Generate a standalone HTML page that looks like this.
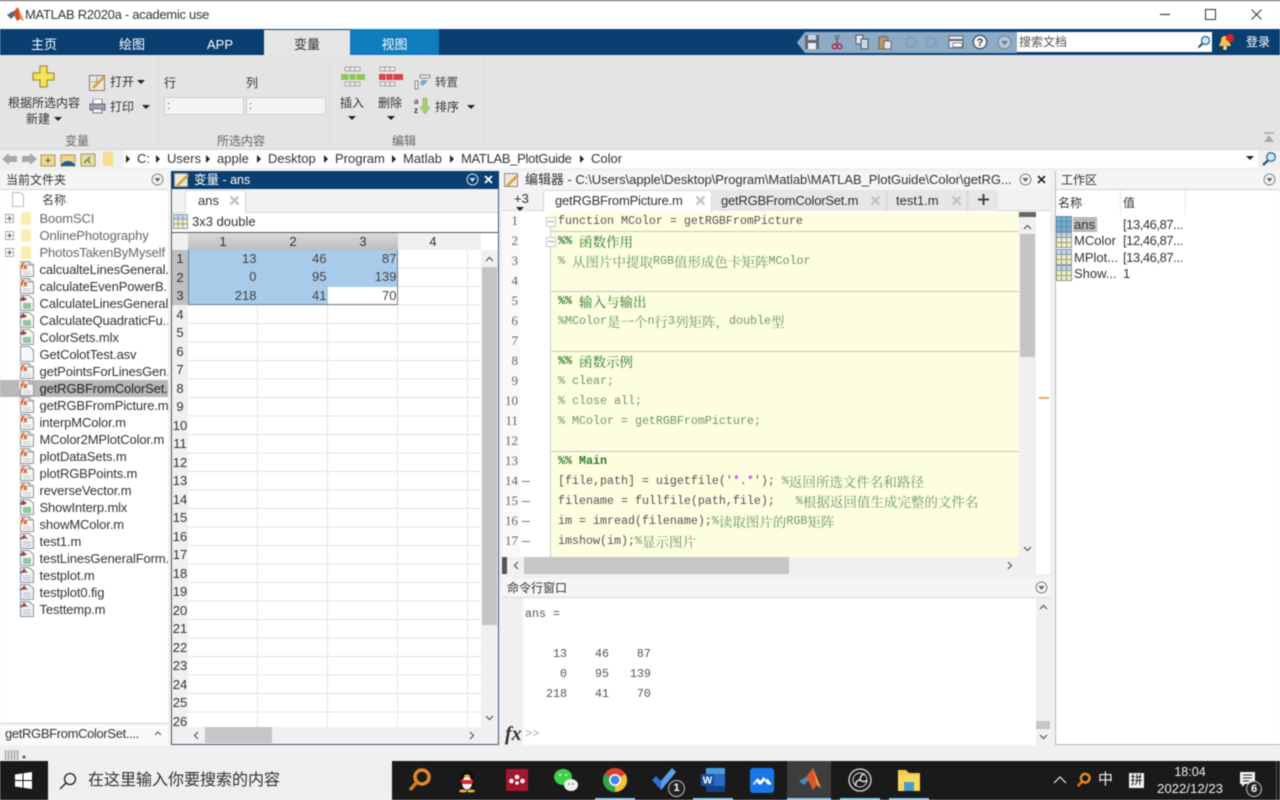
<!DOCTYPE html>
<html lang="zh"><head><meta charset="utf-8"><title>MATLAB R2020a</title>
<style>
html,body{margin:0;padding:0;width:1280px;height:800px;overflow:hidden;background:#f0f0f0}
body{position:relative;font-family:"Liberation Sans","Noto Sans CJK SC",sans-serif;font-size:13px;color:#222}
#p{position:absolute;left:0;top:0;width:1280px;height:800px;overflow:hidden;filter:blur(.4px)}
.a{position:absolute;white-space:nowrap}
.b{position:absolute}
.tab{position:absolute;top:29px;height:26px;line-height:31px;text-align:center;color:#fff;font-size:13px}
.rl{position:absolute;color:#444;font-size:12px;line-height:14px;white-space:nowrap}
.sep{position:absolute;top:58px;width:1px;height:89px;background:#dcdcdc}
.crumb{position:absolute;top:151px;line-height:16px;font-size:13px;color:#333;white-space:nowrap}
.arr{position:absolute;top:155px;width:0;height:0;border-left:4px solid #222;border-top:4px solid transparent;border-bottom:4px solid transparent}
.dn{position:absolute;width:0;height:0;border-top:4px solid #222;border-left:4px solid transparent;border-right:4px solid transparent}
.fl{position:absolute;left:0;top:210px;width:168px}
.fl div{position:relative;height:17px;line-height:17px;padding-left:39.5px;white-space:nowrap;overflow:hidden;color:#333;letter-spacing:-.13px}
.fl svg{position:absolute;left:19px;top:0;width:15px;height:16px}
.fl .d{color:#666}
.fl .s{background:#b8b8b8;margin-right:0;color:#222}
.plus{position:absolute;left:5px;top:4px;width:7px;height:7px;border:1px solid #aaa;background:#fff}
.plus:before{content:"";position:absolute;left:1px;top:3px;width:5px;height:1px;background:#555}
.plus:after{content:"";position:absolute;left:3px;top:1px;width:1px;height:5px;background:#555}
.rn{position:absolute;left:172px;top:250px;width:16px;font-size:13px;color:#333}
.rn div{height:18.5px;line-height:18.5px;text-align:center;white-space:nowrap}
.ch{position:absolute;top:233px;height:17px;line-height:17px;text-align:center;width:70px;color:#333;font-size:13px}
.cell{position:absolute;width:68.500px;height:18px;line-height:18px;text-align:right;color:#444;font-size:13px}
.ed{position:absolute;left:558px;top:211px;font-family:"Liberation Mono","Noto Serif CJK SC",monospace;font-size:11.67px;color:#555}
.ed div{height:20px;line-height:20px;white-space:pre}
.ed i{font-style:normal;font-family:"Noto Serif CJK SC",serif;font-size:13.5px;font-weight:normal;line-height:20px;display:inline-block;height:20px;vertical-align:top}
.g{color:#6c9a60}.h{color:#2c7a2c;font-weight:bold}.v{color:#a020f0}
.ln{position:absolute;left:502px;top:211px;width:16px;font-family:"Liberation Serif","Noto Serif CJK SC",serif;font-size:13px;color:#666;text-align:right}
.ln div{height:20px;line-height:20px}
.hr{position:absolute;left:551px;width:468px;height:1px;background:#c9c9b8}
.dash{position:absolute;left:522px;width:8px;height:1px;background:#777}
.cmd{position:absolute;left:525px;top:604px;font-family:"Liberation Mono",monospace;font-size:11.67px;color:#555}
.cmd div{height:20px;line-height:20px;white-space:pre}
.ws{position:absolute;font-size:13px;color:#333;line-height:17px;white-space:nowrap}
.wv{letter-spacing:-.45px}
.mi{position:absolute;left:1056px;width:16px;height:16px}
.ti{position:absolute;top:767px;width:26px;height:26px}
.ul{position:absolute;top:798px;height:2px;background:#8fc6e8}
.qa{position:absolute;top:34px;width:16px;height:16px}
.fold{position:absolute;left:546px;width:8px;height:8px;background:#fff;border:1px solid #c8c8c8}
.fold:after{content:"";position:absolute;left:1px;top:3px;width:6px;height:1px;background:#999}
</style></head><body><div id="p">
<svg width="0" height="0" style="position:absolute"><defs>
<symbol id="fx" viewBox="0 0 15 16"><path d="M1.500 .5h8.500l4.500 3.500v11.500H1.500z" fill="#f6f6f4" stroke="#8a93a3"/><path d="M10 .5V4h4.500" fill="#dde" stroke="#8a93a3"/><rect x="0" y="1" width="9" height="8" fill="#f3e0cc"/><path d="M2 8l1.500-5.500h2M1.800 5h2.500M5 4l2.500 4M8 4L4.800 8" stroke="#b8421e" stroke-width="1" fill="none"/><path d="M4 11h8M4 13h8" stroke="#c6cad2"/></symbol>
<symbol id="ml" viewBox="0 0 15 16"><path d="M1.500 .5h8.500l4.500 3.500v11.500H1.500z" fill="#f6f6f4" stroke="#8a93a3"/><path d="M1 5l3-4 1.500 1.500L8 4 5 6z" fill="#a5432a"/><path d="M0 5l3-1 1 2z" fill="#2e5f8f"/><rect x="4" y="8" width="8" height="6" fill="#8fc7a5"/></symbol>
<symbol id="tp" viewBox="0 0 15 16"><path d="M1.500 .5h8.500l4.500 3.500v11.500H1.500z" fill="#eef0f4" stroke="#8a93a3"/><path d="M2 6l3-5 2 3 2 2-3-.5z" fill="#b8421e"/><path d="M0 6l3-2 1 2z" fill="#2e5f8f"/><path d="M4 9h8M4 11h8M4 13h8" stroke="#bcc2cc"/></symbol>
<symbol id="mat" viewBox="0 0 16 16"><rect x=".5" y=".5" width="15" height="15" fill="#f4f1b8" stroke="#8d96a0"/><rect x="1" y="1" width="14" height="4.500" fill="#bcd8ee"/><path d="M5.500 1v14M10.500 1v14M1 5.500h14M1 10.500h14" stroke="#8d96a0" stroke-width="1"/></symbol>
</defs></svg>

<!-- title bar -->
<div class="b" style="left:0;top:0;width:1280px;height:29px;background:#fff;border-top:1px solid #555;box-sizing:border-box"></div>
<svg class="b" style="left:7px;top:7px" width="17" height="15" viewBox="0 0 17 15"><path d="M0 8l6-4 3 3-5 5z" fill="#3d6d98"/><path d="M5 6l6-6 6 14-4-2-3 2-3-6z" fill="#c8502a"/><path d="M11 0l6 14-4-2z" fill="#e8923e"/></svg>
<div class="a" style="left:25px;top:7px;line-height:15px;font-size:13px;color:#333;letter-spacing:-.28px">MATLAB R2020a - academic use</div>
<div class="b" style="left:1160px;top:14px;width:10px;height:1px;background:#222"></div>
<div class="b" style="left:1205px;top:9px;width:9px;height:9px;border:1px solid #333"></div>
<svg class="b" style="left:1251px;top:9px" width="11" height="11"><path d="M.5.500l10 10M10.500.500l-10 10" stroke="#333"/></svg>

<!-- tabs -->
<div class="b" style="left:0;top:29px;width:1280px;height:26px;background:#0a4071"></div>
<div class="tab" style="left:0;width:88px">主页</div>
<div class="tab" style="left:88px;width:88px">绘图</div>
<div class="tab" style="left:176px;width:88px">APP</div>
<div class="tab" style="left:264px;width:86px;background:#e5e5e5;color:#333;top:30px;height:25px;line-height:29px">变量</div>
<div class="tab" style="left:350px;width:89px;background:#0f7cbc">视图</div>

<!-- quick access -->
<svg class="b" style="left:797px;top:31px" width="220" height="23"><path d="M8 1H220V22H8L0 11.500z" fill="#8eabc6"/></svg>
<svg class="qa" style="left:804px" viewBox="0 0 16 16"><rect x="1" y="1" width="14" height="14" fill="#5d6a78"/><rect x="4" y="1" width="8" height="5" fill="#cdd5dd"/><rect x="4" y="9" width="8" height="6" fill="#eef1f4"/></svg>
<svg class="qa" style="left:829px" viewBox="0 0 16 16"><path d="M10 1L7 10M6 1l3 9" stroke="#667" stroke-width="1.300"/><circle cx="5.500" cy="12.500" r="2.300" fill="none" stroke="#b02a4a" stroke-width="1.500"/><circle cx="10.500" cy="12.500" r="2.300" fill="none" stroke="#b02a4a" stroke-width="1.500"/></svg>
<svg class="qa" style="left:854px" viewBox="0 0 16 16"><rect x="2" y="1" width="7" height="9" fill="#dfe6ee" stroke="#556"/><rect x="7" y="5" width="7" height="10" fill="#c8d6e6" stroke="#456"/></svg>
<svg class="qa" style="left:877px" viewBox="0 0 16 16"><rect x="2" y="3" width="9" height="12" fill="#b89a66" stroke="#765"/><rect x="4" y="1" width="5" height="3" fill="#889"/><rect x="7" y="7" width="7" height="8" fill="#e6e8ee" stroke="#667"/></svg>
<svg class="qa" style="left:903px" viewBox="0 0 16 16"><circle cx="8" cy="8" r="5" fill="none" stroke="#7f9cb8" stroke-width="1.500"/></svg>
<svg class="qa" style="left:923px" viewBox="0 0 16 16"><circle cx="8" cy="8" r="5" fill="none" stroke="#7f9cb8" stroke-width="1.500"/></svg>
<svg class="qa" style="left:948px" viewBox="0 0 16 16"><rect x="1" y="2" width="14" height="12" fill="#e8edf2" stroke="#667"/><rect x="1" y="5" width="14" height="2" fill="#667"/><rect x="5" y="9" width="9" height="4" fill="#fff" stroke="#889"/></svg>
<svg class="b" style="left:972px;top:34px" width="16" height="16"><circle cx="8" cy="8" r="7.500" fill="#3f5f80"/><circle cx="8" cy="8" r="6" fill="#f4f6f8"/><text x="8" y="12" text-anchor="middle" font-size="11" font-weight="bold" fill="#334" font-family="Liberation Sans">?</text></svg>
<svg class="b" style="left:997px;top:35px" width="15" height="15"><circle cx="7.500" cy="7.500" r="6.500" fill="#b6c6d6" stroke="#718aa3" stroke-width="1.200"/><path d="M4 6h7l-3.500 4z" fill="#5d7791"/></svg>
<div class="b" style="left:1017px;top:32px;width:195px;height:20px;background:#fff"></div>
<div class="a" style="left:1019px;top:35px;line-height:15px;font-size:12px;color:#555">搜索文档</div>
<svg class="b" style="left:1197px;top:35px" width="14" height="14"><circle cx="8.500" cy="5.500" r="4" fill="#d4e8f4" stroke="#3d7ea6" stroke-width="1.500"/><path d="M5.500 8.500L1.500 12.500" stroke="#35556f" stroke-width="2.200"/></svg>
<svg class="b" style="left:1217px;top:33px" width="18" height="18"><path d="M8 3c3 0 4 2 4 5l2 5H2l2-5c0-3 1-5 4-5z" fill="#f2c14e"/><circle cx="8" cy="15" r="2" fill="#f2d488"/><circle cx="13" cy="5" r="4" fill="#e21f26"/></svg>
<div class="a" style="left:1246px;top:35px;line-height:15px;font-size:12px;color:#fff">登录</div>

<!-- ribbon -->
<div class="b" style="left:0;top:55px;width:1280px;height:94px;background:#e4e4e4"></div>
<div class="sep" style="left:158px"></div><div class="sep" style="left:330px"></div><div class="sep" style="left:484px"></div>
<svg class="b" style="left:32px;top:65px" width="24" height="24"><path d="M8 1h7v7h7v7h-7v7H8v-7H1V8h7z" fill="#f4e45c" stroke="#a8933a" stroke-width="1.300"/></svg>
<div class="rl" style="left:8px;top:96px;color:#333">根据所选内容</div>
<div class="rl" style="left:26px;top:112px;color:#333">新建</div><div class="dn" style="left:54px;top:117px"></div>
<svg class="b" style="left:89px;top:74px" width="17" height="17"><rect x=".5" y="1.500" width="15" height="15" fill="#eee8d8" stroke="#778"/><path d="M3 13L14 2l2 2L5 15z" fill="#d9a441"/><path d="M2 8h6M8 3v5" stroke="#99a"/></svg>
<div class="rl" style="left:110px;top:75px;color:#333">打开</div><div class="dn" style="left:137px;top:80px"></div>
<svg class="b" style="left:89px;top:99px" width="17" height="15"><rect x="4" y="0" width="9" height="5" fill="#fff" stroke="#778"/><rect x="1" y="5" width="15" height="6" fill="#99a2ad" stroke="#667"/><rect x="4" y="10" width="9" height="4" fill="#f4f4f4" stroke="#778"/></svg>
<div class="rl" style="left:110px;top:100px;color:#333">打印</div><div class="dn" style="left:142px;top:105px"></div>
<div class="rl" style="left:65px;top:134px;color:#666">变量</div>

<div class="rl" style="left:164px;top:76px;color:#333">行</div>
<div class="rl" style="left:246px;top:76px;color:#333">列</div>
<div class="b" style="left:164px;top:97px;width:78px;height:16px;background:#f4f4f4;border:1px solid #cfcfcf;line-height:17px;font-size:11px;color:#444;text-indent:2px">:</div>
<div class="b" style="left:246px;top:97px;width:78px;height:16px;background:#f4f4f4;border:1px solid #cfcfcf;line-height:17px;font-size:11px;color:#444;text-indent:2px">:</div>
<div class="rl" style="left:217px;top:134px;color:#666">所选内容</div>

<svg class="b" style="left:340px;top:66px" width="26" height="22"><g fill="#e8e8e8" stroke="#9a9a9a" stroke-width=".8"><rect x="5" y="1" width="5" height="4"/><rect x="10" y="1" width="5" height="4"/><rect x="15" y="1" width="5" height="4"/><rect x="5" y="16" width="5" height="4"/><rect x="10" y="16" width="5" height="4"/><rect x="15" y="16" width="5" height="4"/></g><rect x="1" y="8" width="24" height="6" fill="#92c65a"/><path d="M9 8v6M16 8v6" stroke="#d8e8b8"/></svg>
<div class="rl" style="left:340px;top:96px;color:#333">插入</div><div class="dn" style="left:348px;top:116px"></div>
<svg class="b" style="left:378px;top:66px" width="26" height="22"><g fill="#e8e8e8" stroke="#9a9a9a" stroke-width=".8"><rect x="2" y="1" width="5" height="4"/><rect x="7" y="1" width="5" height="4"/><rect x="12" y="1" width="5" height="4"/><rect x="2" y="16" width="5" height="4"/><rect x="7" y="16" width="5" height="4"/><rect x="12" y="16" width="5" height="4"/></g><rect x="1" y="8" width="24" height="6" fill="#d8434e"/><path d="M8 8v6M15 8v6" stroke="#f0a8a8"/></svg>
<div class="rl" style="left:378px;top:96px;color:#333">删除</div><div class="dn" style="left:387px;top:116px"></div>
<svg class="b" style="left:414px;top:74px" width="17" height="16"><rect x="1" y="7" width="3" height="8" fill="#eee" stroke="#889"/><rect x="6" y="1" width="10" height="3" fill="#eee" stroke="#889"/><path d="M14 6L8 6l-2 3 2 3 3-2" fill="#7fa6c9"/></svg>
<div class="rl" style="left:435px;top:76px;color:#444;font-size:11.5px">转置</div>
<svg class="b" style="left:414px;top:97px" width="18" height="18"><text x="0" y="7" font-size="8" font-weight="bold" fill="#445" font-family="Liberation Sans">a</text><text x="0" y="16" font-size="8" font-weight="bold" fill="#333" font-family="Liberation Sans">z</text><path d="M9 1h4v9h3l-5 7-5-7h3z" fill="#a7d070" stroke="#7d9d50" stroke-width=".5"/></svg>
<div class="rl" style="left:435px;top:100px;color:#333">排序</div><div class="dn" style="left:467px;top:105px"></div>
<div class="rl" style="left:392px;top:134px;color:#666">编辑</div>
<svg class="b" style="left:1263px;top:132px" width="12" height="12"><path d="M1 1h10" stroke="#aaa" stroke-width="1.500"/><path d="M6 3l5 7H1z" fill="#aaa"/></svg>

<!-- address bar -->
<div class="b" style="left:0;top:149px;width:1280px;height:20px;background:#f0f0f0;border-top:1px solid #d6d6d6;box-sizing:border-box"></div>
<div class="b" style="left:124px;top:150px;width:1134px;height:18px;background:#fff"></div>
<svg class="b" style="left:2px;top:152px" width="35" height="14"><path d="M0 7l7-6v3h8v6H7v3z" fill="#a8a8a8"/><path d="M35 7l-7-6v3h-8v6h8v3z" fill="#a8a8a8"/></svg>
<svg class="b" style="left:40px;top:152px" width="56" height="15"><rect x="1" y="3" width="14" height="11" fill="#f0d48a" stroke="#a89860"/><path d="M8 6v5M5.500 8.500h5" stroke="#555"/><rect x="21" y="3" width="14" height="11" fill="#f0d48a" stroke="#a89860"/><path d="M21 14a7 5 0 0 1 14 0z" fill="#1e5f96"/><rect x="41" y="2" width="14" height="12" fill="#e6dca8" stroke="#a89860"/><path d="M44 11l6-6M50 11l-2-3" stroke="#7aa04c" stroke-width="2"/></svg>
<svg class="b" style="left:103px;top:152px" width="10" height="15"><rect width="10" height="14" fill="#f6dc8e"/></svg>
<div class="arr" style="left:126px"></div><div class="crumb" style="left:137px">C:</div>
<div class="arr" style="left:156px"></div><div class="crumb" style="left:167px">Users</div>
<div class="arr" style="left:206px"></div><div class="crumb" style="left:217px">apple</div>
<div class="arr" style="left:257px"></div><div class="crumb" style="left:268px">Desktop</div>
<div class="arr" style="left:324px"></div><div class="crumb" style="left:335px">Program</div>
<div class="arr" style="left:392px"></div><div class="crumb" style="left:403px">Matlab</div>
<div class="arr" style="left:450px"></div><div class="crumb" style="left:461px;letter-spacing:-.3px">MATLAB_PlotGuide</div>
<div class="arr" style="left:580px"></div><div class="crumb" style="left:591px">Color</div>
<div class="dn" style="left:1246px;top:156px"></div>
<svg class="b" style="left:1261px;top:151px" width="16" height="16"><circle cx="10" cy="6" r="4.300" fill="#cfe6f3" stroke="#3d7ea6" stroke-width="1.500"/><path d="M7 9.500L2 14" stroke="#35556f" stroke-width="2.400"/></svg>

<!-- content area background -->
<div class="b" style="left:0;top:169px;width:1280px;height:576px;background:#f0f0f0"></div>

<!-- current folder -->
<div class="b" style="left:0;top:171px;width:168px;height:574px;background:#fff"></div>
<div class="b" style="left:0;top:171px;width:168px;height:18px;background:#f5f5f5;border-bottom:1px solid #d8d8d8"></div>
<div class="a" style="left:6px;top:172px;line-height:16px;font-size:12px;color:#333">当前文件夹</div>
<svg class="b" style="left:151px;top:173px" width="13" height="13"><circle cx="6.500" cy="6.500" r="5.500" fill="#f2f2f2" stroke="#888"/><path d="M3.500 5h6l-3 4z" fill="#666"/></svg>
<svg class="b" style="left:12px;top:192px" width="12" height="15"><path d="M.5.500h8l3 3v11H.5z" fill="#fff" stroke="#bbb"/></svg>
<div class="a" style="left:42px;top:192px;line-height:16px;font-size:12px;color:#444">名称<span style="font-size:9px;color:#999">·</span></div>
<div class="fl">
<div class="d"><span class="plus"></span><svg viewBox="0 0 15 16"><rect x="2" y="2" width="10" height="13" fill="#fbeeb4"/></svg>BoomSCI</div>
<div class="d"><span class="plus"></span><svg viewBox="0 0 15 16"><rect x="2" y="2" width="10" height="13" fill="#fbeeb4"/></svg>OnlinePhotography</div>
<div class="d"><span class="plus"></span><svg viewBox="0 0 15 16"><rect x="2" y="2" width="10" height="13" fill="#fbeeb4"/></svg>PhotosTakenByMyself</div>
<div><svg><use href="#fx"/></svg>calcualteLinesGeneral..</div>
<div><svg><use href="#fx"/></svg>calculateEvenPowerB...</div>
<div><svg><use href="#ml"/></svg>CalculateLinesGeneral.</div>
<div><svg><use href="#ml"/></svg>CalculateQuadraticFu...</div>
<div><svg><use href="#ml"/></svg>ColorSets.mlx</div>
<div><svg viewBox="0 0 15 16"><path d="M1.500 .5h8.500l4.500 3.500v11.500H1.500z" fill="#f4f8fc" stroke="#8a93a3"/></svg>GetColotTest.asv</div>
<div><svg><use href="#fx"/></svg>getPointsForLinesGen.</div>
<div class="s"><svg><use href="#fx"/></svg>getRGBFromColorSet...</div>
<div><svg><use href="#fx"/></svg>getRGBFromPicture.m</div>
<div><svg><use href="#fx"/></svg>interpMColor.m</div>
<div><svg><use href="#fx"/></svg>MColor2MPlotColor.m</div>
<div><svg><use href="#fx"/></svg>plotDataSets.m</div>
<div><svg><use href="#fx"/></svg>plotRGBPoints.m</div>
<div><svg><use href="#fx"/></svg>reverseVector.m</div>
<div><svg><use href="#ml"/></svg>ShowInterp.mlx</div>
<div><svg><use href="#fx"/></svg>showMColor.m</div>
<div><svg><use href="#tp"/></svg>test1.m</div>
<div><svg><use href="#ml"/></svg>testLinesGeneralForm.</div>
<div><svg><use href="#tp"/></svg>testplot.m</div>
<div><svg><use href="#tp"/></svg>testplot0.fig</div>
<div><svg><use href="#tp"/></svg>Testtemp.m</div>
</div>
<div class="b" style="left:0;top:723px;width:168px;height:22px;background:#fafafa;border-top:1px solid #ccc;box-sizing:border-box"></div>
<div class="a" style="left:5px;top:726px;line-height:16px;color:#333;letter-spacing:-.35px">getRGBFromColorSet....</div>
<svg class="b" style="left:154px;top:731px" width="8" height="5"><path d="M1 4l3-3 3 3" stroke="#555" fill="none"/></svg>

<!-- variable panel -->
<div class="b" style="left:171px;top:171px;width:328px;height:574px;background:#fff;box-sizing:border-box;border:1px solid #3d5872"></div>
<div class="b" style="left:171px;top:171px;width:328px;height:18px;background:#0a4071"></div>
<svg class="b" style="left:174px;top:172px" width="15" height="16"><rect x=".5" y="1.500" width="13" height="13" fill="#eee8d8" stroke="#99a"/><path d="M2 13L13 2l2 2L4 15z" fill="#d9a441"/></svg>
<div class="a" style="left:194px;top:172px;line-height:16px;font-size:12.5px;color:#fff">变量 - ans</div>
<svg class="b" style="left:466px;top:173px" width="13" height="13"><circle cx="6.500" cy="6.500" r="5.500" fill="#0a4071" stroke="#cfe0ee"/><path d="M3.500 5h6l-3 4z" fill="#cfe0ee"/></svg>
<svg class="b" style="left:484px;top:175px" width="9" height="9"><path d="M1 1l7 7M8 1L1 8" stroke="#fff" stroke-width="1.800"/></svg>
<div class="b" style="left:172px;top:189px;width:326px;height:23px;background:#f2f2f2;border-bottom:1px solid #d8d8d8"></div>
<div class="b" style="left:185px;top:190px;width:61px;height:23px;background:#fff;border:1px solid #d8d8d8;border-bottom:0;border-radius:3px 3px 0 0;box-sizing:border-box"></div>
<div class="a" style="left:198px;top:193px;line-height:15px;color:#333">ans</div>
<svg class="b" style="left:229px;top:195px" width="11" height="11"><path d="M1.500 1.500l8 8M9.500 1.500l-8 8" stroke="#c4c4c4" stroke-width="2.500"/></svg>
<svg class="b" style="left:173px;top:214px;width:15px;height:15px"><use href="#mat"/></svg>
<div class="a" style="left:192px;top:214px;line-height:16px;color:#333">3x3 double</div>
<div class="b" style="left:172px;top:232px;width:326px;height:1px;background:#555"></div>
<!-- grid -->
<div class="b" style="left:188px;top:250px;width:293px;height:477px;background:repeating-linear-gradient(to bottom,transparent 0,transparent 17.5px,#e2e2e2 17.5px,#e2e2e2 18.5px)"></div>
<div class="b" style="left:257px;top:250px;width:1px;height:477px;background:#e4e4e4"></div>
<div class="b" style="left:327px;top:250px;width:1px;height:477px;background:#e4e4e4"></div>
<div class="b" style="left:397px;top:250px;width:1px;height:477px;background:#e4e4e4"></div>
<div class="b" style="left:467px;top:233px;width:1px;height:494px;background:#e4e4e4"></div>
<div class="b" style="left:172px;top:233px;width:16px;height:494px;background:#f0f0f0"></div>
<div class="b" style="left:172px;top:250px;width:16px;height:55px;background:#c0c0c0"></div>
<div class="b" style="left:188px;top:233px;width:210px;height:17px;background:linear-gradient(#dadada,#bdbdbd)"></div>
<div class="b" style="left:398px;top:233px;width:83px;height:17px;background:#f0f0f0"></div>
<div class="ch" style="left:188px">1</div><div class="ch" style="left:258px">2</div><div class="ch" style="left:328px">3</div><div class="ch" style="left:398px">4</div>
<div class="b" style="left:188px;top:250px;width:210px;height:55px;background:#a8cbea;box-sizing:border-box;border:1px solid #6f8294;border-top:0"></div>
<div class="b" style="left:328px;top:287px;width:69px;height:17px;background:#fff"></div>
<div class="cell" style="left:188px;top:250px">13</div><div class="cell" style="left:258px;top:250px">46</div><div class="cell" style="left:328px;top:250px">87</div>
<div class="cell" style="left:188px;top:268px">0</div><div class="cell" style="left:258px;top:268px">95</div><div class="cell" style="left:328px;top:268px">139</div>
<div class="cell" style="left:188px;top:287px">218</div><div class="cell" style="left:258px;top:287px">41</div><div class="cell" style="left:328px;top:287px">70</div>
<div class="rn"><div>1</div><div>2</div><div>3</div><div>4</div><div>5</div><div>6</div><div>7</div><div>8</div><div>9</div><div>10</div><div>11</div><div>12</div><div>13</div><div>14</div><div>15</div><div>16</div><div>17</div><div>18</div><div>19</div><div>20</div><div>21</div><div>22</div><div>23</div><div>24</div><div>25</div><div>26</div></div>
<div class="b" style="left:481px;top:250px;width:17px;height:477px;background:#f0f0f0"></div>
<div class="b" style="left:482px;top:267px;width:15px;height:358px;background:#c4c4c4"></div>
<svg class="b" style="left:485px;top:256px" width="9" height="6"><path d="M1 5l3.500-3.500L8 5" stroke="#555" stroke-width="1.200" fill="none"/></svg>
<svg class="b" style="left:485px;top:715px" width="9" height="6"><path d="M1 1l3.500 3.500L8 1" stroke="#555" stroke-width="1.200" fill="none"/></svg>
<div class="b" style="left:172px;top:727px;width:326px;height:17px;background:#f0f0f0"></div>
<div class="b" style="left:205px;top:727px;width:67px;height:16px;background:#c6c6c6"></div>
<svg class="b" style="left:193px;top:731px" width="6" height="9"><path d="M5 1L1.500 4.500 5 8" stroke="#555" stroke-width="1.200" fill="none"/></svg>
<svg class="b" style="left:469px;top:731px" width="6" height="9"><path d="M1 1l3.500 3.500L1 8" stroke="#555" stroke-width="1.200" fill="none"/></svg>

<!-- editor panel -->
<div class="b" style="left:502px;top:171px;width:548px;height:403px;background:#fff"></div>
<div class="b" style="left:502px;top:171px;width:548px;height:18px;background:#f5f5f5"></div>
<svg class="b" style="left:504px;top:172px" width="15" height="16"><rect x=".5" y="1.500" width="13" height="13" fill="#eee8d8" stroke="#889"/><path d="M2 13L13 2l2 2L4 15z" fill="#d9a441"/></svg>
<div class="a" style="left:525px;top:172px;line-height:16px;font-size:13px;letter-spacing:-.04px;color:#333">编辑器 - C:\Users\apple\Desktop\Program\Matlab\MATLAB_PlotGuide\Color\getRG...</div>
<svg class="b" style="left:1019px;top:173px" width="13" height="13"><circle cx="6.500" cy="6.500" r="5.500" fill="#f2f2f2" stroke="#888"/><path d="M3.500 5h6l-3 4z" fill="#666"/></svg>
<svg class="b" style="left:1037px;top:175px" width="9" height="9"><path d="M1 1l7 7M8 1L1 8" stroke="#222" stroke-width="1.600"/></svg>
<div class="b" style="left:502px;top:189px;width:548px;height:22px;background:#f2f2f2;border-bottom:1px solid #d4d4d4;box-sizing:border-box"></div>
<div class="a" style="left:514px;top:191px;line-height:15px;color:#333">+3</div><div class="dn" style="left:516px;top:207px"></div>
<div class="b" style="left:543px;top:190px;width:169px;height:22px;background:#fff;border:1px solid #d8d8d8;border-bottom:0;border-radius:3px 3px 0 0;box-sizing:border-box"></div>
<div class="b" style="left:712px;top:190px;width:175px;height:21px;background:#e6e6e6;border-right:1px solid #cfcfcf;box-sizing:border-box"></div>
<div class="b" style="left:887px;top:190px;width:81px;height:21px;background:#e6e6e6;border-right:1px solid #cfcfcf;box-sizing:border-box"></div>
<div class="b" style="left:968px;top:190px;width:30px;height:21px;background:#e6e6e6;border-radius:0 3px 0 0"></div>
<div class="a" style="left:555px;top:193px;line-height:15px;color:#333;letter-spacing:-.2px">getRGBFromPicture.m</div>
<svg class="b" style="left:695px;top:195px" width="11" height="11"><path d="M1.500 1.500l8 8M9.500 1.500l-8 8" stroke="#c4c4c4" stroke-width="2.500"/></svg>
<div class="a" style="left:721px;top:193px;line-height:15px;color:#333;letter-spacing:-.22px">getRGBFromColorSet.m</div>
<svg class="b" style="left:870px;top:195px" width="11" height="11"><path d="M1.500 1.500l8 8M9.500 1.500l-8 8" stroke="#c4c4c4" stroke-width="2.500"/></svg>
<div class="a" style="left:896px;top:193px;line-height:15px;color:#333">test1.m</div>
<svg class="b" style="left:951px;top:195px" width="11" height="11"><path d="M1.500 1.500l8 8M9.500 1.500l-8 8" stroke="#c4c4c4" stroke-width="2.500"/></svg>
<svg class="b" style="left:978px;top:194px" width="11" height="11"><path d="M5.500 0v11M0 5.500h11" stroke="#444" stroke-width="2"/></svg>
<div class="b" style="left:551px;top:212px;width:468px;height:345px;background:#fdfde0"></div>
<div class="b" style="left:502px;top:212px;width:18px;height:345px;background:#f9f9f9"></div>
<div class="hr" style="top:231px"></div><div class="hr" style="top:291px"></div><div class="hr" style="top:351px"></div><div class="hr" style="top:451px"></div>
<div class="b" style="left:550px;top:225px;width:1px;height:332px;background:#cfcfcf"></div>
<div class="fold" style="top:217px"></div>
<div class="fold" style="top:237px"></div>
<div class="ln"><div>1</div><div>2</div><div>3</div><div>4</div><div>5</div><div>6</div><div>7</div><div>8</div><div>9</div><div>10</div><div>11</div><div>12</div><div>13</div><div>14</div><div>15</div><div>16</div><div>17</div></div>
<div class="dash" style="top:481px"></div><div class="dash" style="top:501px"></div><div class="dash" style="top:521px"></div><div class="dash" style="top:541px"></div>
<div class="ed">
<div>function MColor = getRGBFromPicture</div>
<div class="h">%% <i>函数作用</i></div>
<div class="g">% <i>从图片中提取</i>RGB<i>值形成色卡矩阵</i>MColor</div>
<div> </div>
<div class="h">%% <i>输入与输出</i></div>
<div class="g">%MColor<i>是一个</i>n<i>行</i>3<i>列矩阵，</i>double<i>型</i></div>
<div> </div>
<div class="h">%% <i>函数示例</i></div>
<div class="g">% clear;</div>
<div class="g">% close all;</div>
<div class="g">% MColor = getRGBFromPicture;</div>
<div> </div>
<div class="h">%% Main</div>
<div>[file,path] = uigetfile('<span class="v">*.*</span>'); <span class="g">%<i>返回所选文件名和路径</i></span></div>
<div>filename = fullfile(path,file);   <span class="g">%<i>根据返回值生成完整的文件名</i></span></div>
<div>im = imread(filename);<span class="g">%<i>读取图片的</i>RGB<i>矩阵</i></span></div>
<div>imshow(im);<span class="g">%<i>显示图片</i></span></div>
</div>
<div class="b" style="left:1019px;top:212px;width:17px;height:345px;background:#f0f0f0"></div>
<div class="b" style="left:1019px;top:212px;width:17px;height:5px;background:#666"></div>
<div class="b" style="left:1020px;top:234px;width:15px;height:123px;background:#c4c4c4"></div>
<svg class="b" style="left:1023px;top:224px" width="9" height="6"><path d="M1 5l3.500-3.500L8 5" stroke="#555" stroke-width="1.200" fill="none"/></svg>
<svg class="b" style="left:1023px;top:546px" width="9" height="6"><path d="M1 1l3.500 3.500L8 1" stroke="#555" stroke-width="1.200" fill="none"/></svg>
<div class="b" style="left:1039px;top:397px;width:10px;height:2px;background:#e8a860"></div>
<div class="b" style="left:502px;top:557px;width:534px;height:17px;background:#f0f0f0"></div>
<div class="b" style="left:502px;top:557px;width:5px;height:17px;background:#555"></div>
<div class="b" style="left:524px;top:557px;width:265px;height:17px;background:#c6c6c6"></div>
<svg class="b" style="left:513px;top:561px" width="6" height="9"><path d="M5 1L1.500 4.500 5 8" stroke="#555" stroke-width="1.200" fill="none"/></svg>
<svg class="b" style="left:1007px;top:561px" width="6" height="9"><path d="M1 1l3.500 3.500L1 8" stroke="#555" stroke-width="1.200" fill="none"/></svg>

<!-- command window -->
<div class="b" style="left:502px;top:578px;width:548px;height:167px;background:#fff"></div>
<div class="b" style="left:502px;top:578px;width:548px;height:19px;background:#f5f5f5;border-bottom:1px solid #d8d8d8"></div>
<div class="a" style="left:507px;top:580px;line-height:16px;font-size:12px;color:#333">命令行窗口</div>
<svg class="b" style="left:1035px;top:581px" width="13" height="13"><circle cx="6.500" cy="6.500" r="5.500" fill="#f2f2f2" stroke="#888"/><path d="M3.500 5h6l-3 4z" fill="#666"/></svg>
<div class="b" style="left:502px;top:598px;width:21px;height:147px;background:#f0f0f0"></div>
<div class="cmd"><div>ans =</div><div> </div><div>    13    46    87</div><div>     0    95   139</div><div>   218    41    70</div></div>
<div class="a" style="left:505px;top:722px;font-family:'Liberation Serif',serif;font-style:italic;font-weight:bold;font-size:20px;line-height:24px;color:#333">fx</div>
<div class="a" style="left:525px;top:726px;font-family:'Liberation Mono',monospace;font-size:12px;line-height:16px;color:#aaa">&gt;&gt;</div>
<div class="b" style="left:1036px;top:598px;width:14px;height:147px;background:#f0f0f0"></div>
<div class="b" style="left:1036px;top:721px;width:14px;height:8px;background:#c6c6c6"></div>
<svg class="b" style="left:1039px;top:604px" width="9" height="6"><path d="M1 5l3.500-3.500L8 5" stroke="#555" stroke-width="1.200" fill="none"/></svg>
<svg class="b" style="left:1039px;top:734px" width="9" height="6"><path d="M1 1l3.500 3.500L8 1" stroke="#555" stroke-width="1.200" fill="none"/></svg>

<!-- workspace -->
<div class="b" style="left:1055px;top:171px;width:225px;height:574px;background:#fff;border-left:1px solid #bbb;border-bottom:1px solid #bbb;box-sizing:border-box"></div>
<div class="b" style="left:1056px;top:171px;width:224px;height:18px;background:#f5f5f5;border-bottom:1px solid #d0d0d0"></div>
<div class="a" style="left:1061px;top:172px;line-height:16px;font-size:12px;color:#333">工作区</div>
<svg class="b" style="left:1263px;top:173px" width="13" height="13"><circle cx="6.500" cy="6.500" r="5.500" fill="#f2f2f2" stroke="#888"/><path d="M3.500 5h6l-3 4z" fill="#666"/></svg>
<div class="a" style="left:1058px;top:195px;line-height:16px;font-size:12px;color:#333">名称<span style="font-size:9px;color:#999">·</span></div>
<div class="a" style="left:1123px;top:195px;line-height:16px;font-size:12px;color:#333">值</div>
<div class="b" style="left:1120px;top:190px;width:1px;height:25px;background:#e8e8e8"></div><div class="b" style="left:1185px;top:190px;width:1px;height:25px;background:#e8e8e8"></div>
<svg class="mi" style="top:216px"><rect x=".5" y=".5" width="15" height="15" fill="#6fb0d4" stroke="#6f8aa0"/><path d="M5.500 1v14M10.500 1v14M1 5.500h14M1 10.500h14" stroke="#5f8aa8"/></svg>
<svg class="mi" style="top:232px"><use href="#mat"/></svg>
<svg class="mi" style="top:249px"><use href="#mat"/></svg>
<svg class="mi" style="top:265px"><use href="#mat"/></svg>
<div class="b" style="left:1073px;top:217px;width:24px;height:15px;background:#b8b8b8"></div>
<div class="ws" style="left:1074px;top:216px">ans</div><div class="ws wv" style="left:1123px;top:216px">[13,46,87...</div>
<div class="ws" style="left:1074px;top:232px">MColor</div><div class="ws wv" style="left:1123px;top:232px">[12,46,87...</div>
<div class="ws" style="left:1074px;top:249px">MPlot...</div><div class="ws wv" style="left:1123px;top:249px">[13,46,87...</div>
<div class="ws" style="left:1074px;top:265px">Show...</div><div class="ws" style="left:1123px;top:265px">1</div>

<!-- status bar -->
<div class="b" style="left:0;top:745px;width:1280px;height:16px;background:#f0f0f0"></div>
<div class="b" style="left:5px;top:750px;width:14px;height:10px;background:repeating-linear-gradient(to right,#999 0,#999 1px,#e0e0e0 1px,#e0e0e0 3px)"></div>
<div class="b" style="left:22px;top:755px;width:0;height:0;border-bottom:3px solid #333;border-left:2px solid transparent;border-right:2px solid transparent"></div>

<!-- taskbar -->
<div class="b" style="left:0;top:761px;width:1280px;height:39px;background:#1a1a1a"></div>
<svg class="b" style="left:15px;top:772px" width="17" height="17"><path d="M0 2.500L7.500 1.400V8H0zM8.500 1.300L17 0v8H8.500zM0 9h7.500v6.600L0 14.500zM8.500 9H17v8l-8.500-1.200z" fill="#fff"/></svg>
<div class="b" style="left:48px;top:761px;width:344px;height:39px;background:#efefef"></div>
<svg class="b" style="left:59px;top:772px" width="18" height="18"><circle cx="11" cy="7" r="5.500" fill="none" stroke="#222" stroke-width="1.300"/><path d="M7 11L1 17" stroke="#222" stroke-width="1.300"/></svg>
<div class="a" style="left:88px;top:771px;line-height:20px;font-size:16px;color:#333">在这里输入你要搜索的内容</div>
<svg class="ti" style="left:407px" viewBox="0 0 26 26"><circle cx="15" cy="10" r="7" fill="none" stroke="#e8862a" stroke-width="3.500"/><path d="M10 15L3 23" stroke="#d87a20" stroke-width="3.500"/></svg>
<svg class="ti" style="left:454px" viewBox="0 0 26 26"><ellipse cx="13" cy="13" rx="7.500" ry="10.500" fill="#111"/><ellipse cx="13" cy="16" rx="5" ry="6.500" fill="#f4f4f4"/><path d="M6 13h14l-2 4H8z" fill="#d6282e"/><ellipse cx="13" cy="9" rx="3" ry="1.500" fill="#f2b233"/><ellipse cx="9" cy="24" rx="4" ry="1.500" fill="#f2b233"/><ellipse cx="17" cy="24" rx="4" ry="1.500" fill="#f2b233"/></svg>
<svg class="ti" style="left:504px" viewBox="0 0 26 26"><rect x="2" y="2" width="22" height="22" fill="#a3162e"/><circle cx="13" cy="10" r="2.300" fill="#fff"/><circle cx="7.500" cy="14" r="2.300" fill="#fff"/><circle cx="18.500" cy="14" r="2.300" fill="#fff"/><circle cx="13" cy="16" r="1.800" fill="#fff"/></svg>
<svg class="ti" style="left:553px" viewBox="0 0 26 26"><ellipse cx="10" cy="10" rx="9" ry="8" fill="#3fcf4b"/><ellipse cx="18" cy="18" rx="7" ry="6" fill="#f0f0f0"/><circle cx="7" cy="8" r="1" fill="#fff"/><circle cx="13" cy="8" r="1" fill="#fff"/><circle cx="16" cy="17" r=".9" fill="#777"/><circle cx="20" cy="17" r=".9" fill="#777"/></svg>
<svg class="ti" style="left:602px" viewBox="0 0 26 26"><circle cx="13" cy="13" r="12" fill="#d8402f"/><path d="M13 13L23.500 7A12 12 0 0 1 13 25z" fill="#f2c230"/><path d="M13 13L13 25A12 12 0 0 1 2.500 7z" fill="#38a34a"/><circle cx="13" cy="13" r="6" fill="#fff"/><circle cx="13" cy="13" r="4.500" fill="#4285f4"/></svg>
<svg class="ti" style="left:651px" viewBox="0 0 26 26"><path d="M1 13l4-4 5 5L21 1l4 4-15 18z" fill="#2f6fd0"/><path d="M10 14L21 1l4 4-15 18z" fill="#5aa0e8"/></svg>
<div class="b" style="left:668px;top:780px;width:15px;height:15px;border:1px solid #bbb;border-radius:50%;background:#222;color:#fff;font-weight:bold;font-size:11px;line-height:15px;text-align:center">1</div>
<svg class="ti" style="left:700px" viewBox="0 0 26 26"><rect x="6" y="1" width="19" height="24" rx="2" fill="#2a6cc4"/><rect x="6" y="1" width="19" height="6" fill="#4a9ae0"/><rect x="6" y="19" width="19" height="6" fill="#173f86"/><rect x="1" y="7" width="13" height="12" fill="#1a4fa0"/><text x="7.500" y="16.500" text-anchor="middle" font-size="10" font-weight="bold" fill="#fff" font-family="Liberation Sans">W</text></svg>
<svg class="ti" style="left:749px" viewBox="0 0 26 26"><rect x="1" y="1" width="24" height="25" rx="3" fill="#1976e8"/><path d="M4 17l4.500-6 3 3 3-4 3 3 1-1.500 4 5.500c-2 1.500-4 .5-5-1l-2-2.500-2.500 3c-1 1.500-3 1.500-4 0l-1.500-2-1.500 2.500c-1 1-2 .5-2 .5z" fill="#fff"/></svg>
<div class="b" style="left:787px;top:761px;width:44px;height:39px;background:#3d3d3d"></div>
<svg class="ti" style="left:798px" viewBox="0 0 26 26"><path d="M1 14l7-4 3 3-5 5z" fill="#4d86b8"/><path d="M8 10l7-9 8 20-4-3-4 5-5-10z" fill="#d9562a"/><path d="M15 1l8 20-4-3z" fill="#f09a3e"/></svg>
<svg class="ti" style="left:847px" viewBox="0 0 26 26"><circle cx="13" cy="13" r="11" fill="#1c1c1c" stroke="#ddd" stroke-width="1.300"/><circle cx="13" cy="13" r="7" fill="none" stroke="#ddd" stroke-width="1"/><path d="M13 13c0-3 2-6 5-6M13 13c-3 0-5 3-4 6M13 13c2 2 6 2 7 0" stroke="#ddd" stroke-width="1.500" fill="none"/></svg>
<svg class="ti" style="left:896px" viewBox="0 0 26 26"><path d="M2 3h8l3 3h11v18H2z" fill="#f4c84a"/><rect x="2" y="8" width="22" height="16" fill="#f8d860"/><rect x="8" y="15" width="10" height="9" fill="#4a9cc8"/></svg>
<div class="ul" style="left:595px;width:40px"></div>
<div class="ul" style="left:693px;width:40px"></div>
<div class="ul" style="left:787px;width:44px"></div>
<div class="ul" style="left:840px;width:40px"></div>
<div class="ul" style="left:889px;width:40px"></div>
<svg class="b" style="left:1053px;top:776px" width="14" height="8"><path d="M1 7l6-6 6 6" stroke="#eee" stroke-width="1.200" fill="none"/></svg>
<svg class="b" style="left:1076px;top:771px" width="16" height="18" viewBox="0 0 26 26"><circle cx="15" cy="10" r="7" fill="none" stroke="#e8862a" stroke-width="4"/><path d="M10 15L3 23" stroke="#d87a20" stroke-width="4"/></svg>
<div class="a" style="left:1098px;top:771px;line-height:18px;font-size:15px;color:#eee">中</div>
<div class="b" style="left:1129px;top:773px;width:15px;height:15px;background:#eee;color:#111;font-size:12px;line-height:15px;text-align:center">拼</div>
<div class="a" style="left:1155px;top:764px;width:70px;text-align:center;line-height:16px;font-size:12.5px;color:#eee">18:04</div>
<div class="a" style="left:1155px;top:781px;width:70px;text-align:center;line-height:16px;font-size:13.2px;color:#eee">2022/12/23</div>
<svg class="b" style="left:1240px;top:772px" width="15" height="15"><path d="M0 0h15v12H5l-3 3v-3H0z" fill="#eee"/><path d="M3 3h9M3 6h9M3 9h6" stroke="#333"/></svg>
<div class="b" style="left:1246px;top:781px;width:14px;height:14px;border:1px solid #bbb;border-radius:50%;background:#222;color:#fff;font-weight:bold;font-size:11px;line-height:14px;text-align:center">6</div>
<div class="b" style="left:1276px;top:761px;width:1px;height:39px;background:#555"></div>
</div></body></html>
